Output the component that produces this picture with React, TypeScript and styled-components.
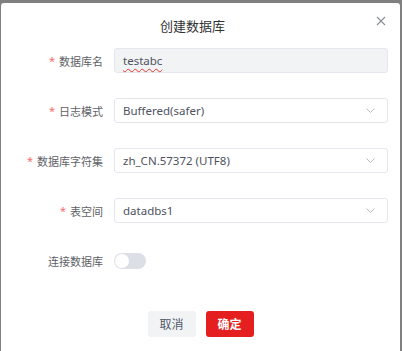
import { Fragment } from "react";
import styled, { createGlobalStyle } from "styled-components";

const GlobalStyle = createGlobalStyle`
  html, body {
    margin: 0;
    padding: 0;
    background: #808080;
    height: 100%;
  }
  body {
    font-family: "Noto Sans", "Noto Sans CJK SC", sans-serif;
  }
`;

const Page = styled.div`
  padding: 3px 2px 0 1px;
  height: 351px;
  box-sizing: border-box;
  display: flex;
`;

const Dialog = styled.div`
  flex: 1;
  background: #ffffff;
  border-radius: 3px 3px 0 0;
  display: flex;
  flex-direction: column;
`;

const Header = styled.div`
  height: 44px;
  display: flex;
  align-items: center;
  padding-right: 12px;
`;

const Title = styled.div`
  flex: 1;
  text-align: center;
  font-size: 13px;
  color: #303133;
  padding-left: 10px;
`;

const CloseButton = styled.button`
  width: 14px;
  height: 14px;
  border: none;
  background: none;
  padding: 0;
  margin-top: -8px;
  display: flex;
  align-items: center;
  justify-content: center;
  cursor: pointer;
`;

const Form = styled.div`
  display: grid;
  grid-template-columns: 102px 1fr;
  column-gap: 11px;
  row-gap: 25px;
  padding: 1px 12px 0 0;
`;

const Label = styled.div`
  height: 25px;
  display: flex;
  align-items: center;
  justify-content: flex-end;
  font-size: 11px;
  color: #606266;
  white-space: nowrap;
`;

const Star = styled.span`
  color: #f56c6c;
  margin-right: 4px;
  font-size: 11px;
`;

const Field = styled.div<{ $disabled?: boolean }>`
  height: 25px;
  box-sizing: border-box;
  border: 1px solid #e4e7ed;
  border-radius: 3px;
  background: ${(p) => (p.$disabled ? "#f2f3f5" : "#ffffff")};
  display: flex;
  align-items: center;
  padding: 0 12px 0 8px;
  font-size: 11.5px;
  color: #4e5260;
`;

const Value = styled.span`
  flex: 1;
`;

const Misspelled = styled.span`
  text-decoration: underline wavy #e53935;
  text-decoration-thickness: 1px;
  text-underline-offset: 3px;
`;

const SwitchCell = styled.div`
  height: 25px;
  display: flex;
  align-items: center;
`;

const Switch = styled.div<{ $on?: boolean }>`
  width: 32px;
  height: 16px;
  border-radius: 8px;
  background: ${(p) => (p.$on ? "#e51f20" : "#dcdfe6")};
  display: flex;
  align-items: center;
  padding: 1px;
  box-sizing: border-box;
`;

const Knob = styled.div`
  width: 14px;
  height: 14px;
  border-radius: 50%;
  background: #ffffff;
`;

const Footer = styled.div`
  display: flex;
  justify-content: center;
  gap: 10px;
  padding-top: 38px;
`;

const Button = styled.button<{ $primary?: boolean }>`
  width: 48px;
  height: 26px;
  border: none;
  border-radius: 3px;
  font-family: inherit;
  font-size: 12px;
  cursor: pointer;
  background: ${(p) => (p.$primary ? "#e51f20" : "#f2f3f5")};
  color: ${(p) => (p.$primary ? "#ffffff" : "#4e5969")};
  font-weight: ${(p) => (p.$primary ? 600 : 400)};
`;

const Chevron = () => (
  <svg width="9" height="5" viewBox="0 0 9 5" fill="none">
    <path d="M0.5 0.5 L4.5 4.5 L8.5 0.5" stroke="#b8bcc6" strokeWidth="1" />
  </svg>
);

const rows = [
  { label: "日志模式", value: "Buffered(safer)" },
  { label: "数据库字符集", value: "zh_CN.57372 (UTF8)" },
  { label: "表空间", value: "datadbs1" },
];

const App = () => {
  return (
    <>
      <GlobalStyle />
      <Page>
        <Dialog>
          <Header>
            <Title>创建数据库</Title>
            <CloseButton>
              <svg width="10" height="10" viewBox="0 0 10 10">
                <path d="M1 1 L9 9 M9 1 L1 9" stroke="#8a8f99" strokeWidth="1.1" />
              </svg>
            </CloseButton>
          </Header>
          <Form>
            <Label>
              <Star>*</Star>数据库名
            </Label>
            <Field $disabled>
              <Value>
                <Misspelled>testabc</Misspelled>
              </Value>
            </Field>
            {rows.map((r) => (
              <Fragment key={r.label}>
                <Label>
                  <Star>*</Star>
                  {r.label}
                </Label>
                <Field>
                  <Value>{r.value}</Value>
                  <Chevron />
                </Field>
              </Fragment>
            ))}
            <Label>连接数据库</Label>
            <SwitchCell>
              <Switch>
                <Knob />
              </Switch>
            </SwitchCell>
          </Form>
          <Footer>
            <Button>取消</Button>
            <Button $primary>确定</Button>
          </Footer>
        </Dialog>
      </Page>
    </>
  );
};

export default App;
